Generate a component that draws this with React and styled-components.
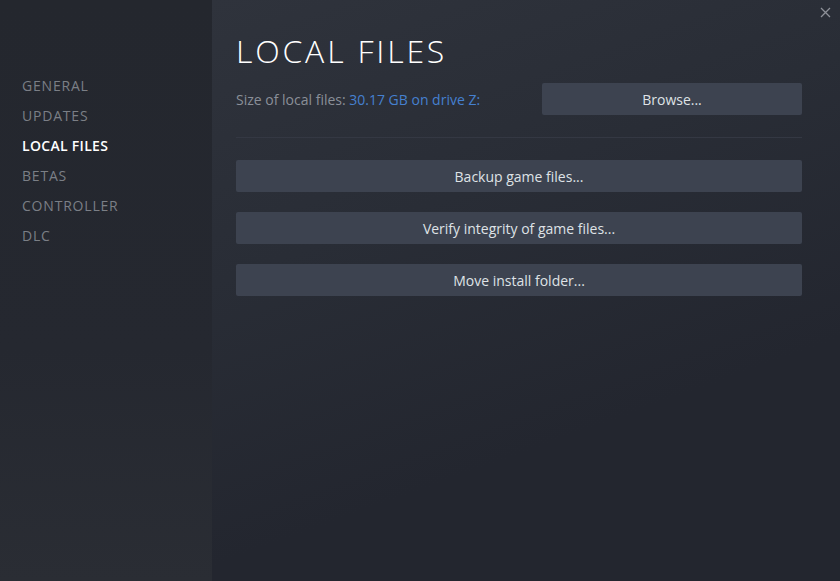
import React from "react";
import styled, { createGlobalStyle } from "styled-components";

const GlobalStyle = createGlobalStyle`
  html, body {
    margin: 0;
    padding: 0;
    background: #23262e;
  }
  #root {
    height: 581px;
  }
`;

const Window = styled.div`
  position: relative;
  display: flex;
  width: 840px;
  height: 581px;
  overflow: hidden;
  font-family: "Open Sans", "Noto Sans", Arial, sans-serif;
`;

const Sidebar = styled.nav`
  width: 212px;
  flex-shrink: 0;
  padding-top: 71px;
  box-sizing: border-box;
  background: linear-gradient(180deg, #24272e 0%, #252830 60%, #2a2d34 100%);
  display: flex;
  flex-direction: column;
`;

const NavItem = styled.div`
  height: 30px;
  line-height: 30px;
  padding-left: 22px;
  font-size: 14px;
  letter-spacing: ${(p) => (p.active ? "0.3px" : "0.8px")};
  color: ${(p) => (p.active ? "#ffffff" : "#7b7f86")};
  font-weight: ${(p) => (p.active ? 600 : 400)};
`;

const Main = styled.main`
  flex: 1;
  padding: 31px 38px 0 24px;
  background: linear-gradient(160deg, #2f333c 0%, #292d36 35%, #23262f 70%, #23262f 100%);
  display: flex;
  flex-direction: column;
`;

const Title = styled.h1`
  margin: 0;
  font-size: 32px;
  line-height: 40px;
  font-weight: 300;
  letter-spacing: 2.8px;
  color: #ffffff;
`;

const SizeRow = styled.div`
  margin-top: 12px;
  display: flex;
  align-items: center;
  justify-content: space-between;
  padding-bottom: 22px;
  border-bottom: 1px solid #343843;
`;

const SizeLabel = styled.span`
  font-size: 14px;
  color: #8a8f98;
`;

const SizeValue = styled.span`
  color: #4580d0;
`;

const Button = styled.button`
  width: ${(p) => p.width || "100%"};
  height: 32px;
  border: none;
  border-radius: 2px;
  background: #3d4350;
  color: #dfe2e6;
  font-family: inherit;
  font-size: 14px;
  cursor: pointer;
  padding: 0;
`;

const ActionList = styled.div`
  margin-top: 22px;
  display: flex;
  flex-direction: column;
  gap: 20px;
`;

const Close = styled.div`
  position: absolute;
  top: 5px;
  right: 8px;
  width: 14px;
  height: 14px;
  display: flex;
  align-items: center;
  justify-content: center;
`;

const navItems = ["GENERAL", "UPDATES", "LOCAL FILES", "BETAS", "CONTROLLER", "DLC"];

export default function App() {
  return (
    <Window>
      <GlobalStyle />
      <Sidebar>
        {navItems.map((item) => (
          <NavItem key={item} active={item === "LOCAL FILES"}>
            {item}
          </NavItem>
        ))}
      </Sidebar>
      <Main>
        <Title>LOCAL FILES</Title>
        <SizeRow>
          <SizeLabel>
            Size of local files: <SizeValue>30.17 GB on drive Z:</SizeValue>
          </SizeLabel>
          <Button width="260px">Browse...</Button>
        </SizeRow>
        <ActionList>
          <Button>Backup game files...</Button>
          <Button>Verify integrity of game files...</Button>
          <Button>Move install folder...</Button>
        </ActionList>
      </Main>
      <Close>
        <svg width="11" height="11" viewBox="0 0 11 11">
          <path d="M1 1L10 10M10 1L1 10" stroke="#8d9098" strokeWidth="1.3" />
        </svg>
      </Close>
    </Window>
  );
}
